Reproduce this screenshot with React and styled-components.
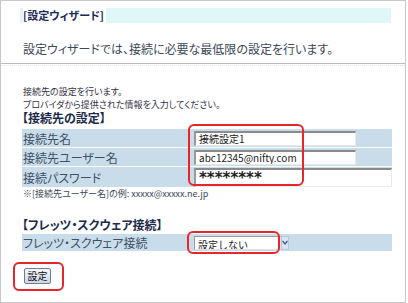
import React from 'react'
import styled, { createGlobalStyle } from 'styled-components'

const GlobalStyle = createGlobalStyle`
  html, body {
    margin: 0;
    padding: 0;
    background: #fff;
  }
  body {
    font-family: "Noto Sans CJK JP", "DejaVu Sans", sans-serif;
    font-feature-settings: "palt";
    color: #3b4a5c;
  }
`

const Frame = styled.div`
  position: relative;
  box-sizing: border-box;
  width: 406px;
  height: 303px;
  border: 1px solid #c8c8c8;
`

const TitleBar = styled.div`
  margin: 7px 14px 0 19px;
  height: 15px;
  padding-left: 3px;
  font-size: 11px;
  font-weight: bold;
  line-height: 15px;
  color: #1c2a5a;
  background-color: #dff7f9;
`

const TitleText = styled.span`
  background: #fff;
  padding-right: 2px;
`

const Lead = styled.p`
  margin: 19px 0 0 22px;
  font-size: 12px;
  line-height: 14px;
  color: #3c4858;
`

const Divider = styled.div`
  margin-top: 7px;
  border-top: 1px solid #bcbcbc;
  border-bottom: 1px dotted #e2e2e2;
  height: 1px;
`

const Body = styled.div`
  padding: 0 13px 0 21px;
`

const Intro = styled.p`
  margin: 19px 0 0 1px;
  font-size: 9px;
  line-height: 13px;
  color: #334;
`

const Heading = styled.h2`
  margin: 0;
  font-size: 12px;
  font-weight: bold;
  line-height: 14px;
  color: #1c2a4a;
  margin-top: ${p => p.$top || 0}px;
`

const Table = styled.div`
  display: flex;
  flex-direction: column;
  gap: 1px;
  width: 370px;
  margin-top: ${p => p.$top || 0}px;
`

const Row = styled.div`
  display: flex;
  align-items: center;
  height: ${p => p.$h || 18}px;
  background: #c9dcea;
`

const Label = styled.div`
  width: 170px;
  padding-left: 1px;
  font-size: 12px;
  color: #3e5068;
`

const Field = styled.input`
  box-sizing: border-box;
  width: ${p => p.$w}px;
  height: ${p => p.$h || 15}px;
  margin-left: 1px;
  padding: 0 3px;
  border-style: solid;
  border-width: 2px 1px 1px 2px;
  border-color: #8a8a8a #eaeaea #eaeaea #9a9a9a;
  background: #fff;
  font-family: ${p => (p.$mono ? '"DejaVu Sans", sans-serif' : '"Noto Sans CJK JP", "DejaVu Sans", sans-serif')};
  font-size: ${p => p.$fs || 10}px;
  font-weight: ${p => (p.$bold ? 'bold' : 'normal')};
  color: #222;
  outline: none;
`

const Note = styled.p`
  margin: 1px 0 0 1px;
  font-size: 9px;
  line-height: 12px;
  color: #3c4858;
`

const Dropdown = styled.div`
  display: flex;
  align-items: center;
  margin-left: 1px;
`

const Select = styled.select`
  appearance: none;
  box-sizing: border-box;
  width: 87px;
  height: 14px;
  padding: 0 3px;
  border-style: solid;
  border-width: 1px;
  border-color: #9a9a9a #e0e0e0 #e0e0e0 #9a9a9a;
  background: #fff;
  font-family: "Noto Sans CJK JP", "DejaVu Sans", sans-serif;
  font-size: 10px;
  color: #222;
  outline: none;
`

const Arrow = styled.span`
  display: flex;
  align-items: center;
  justify-content: center;
  width: 8px;
  height: 14px;
  background: #d9e4f2;
  border: 1px solid #b8c8dc;
  box-sizing: border-box;
`

const SubmitButton = styled.button`
  display: block;
  margin: 17px 0 0 2px;
  width: 27px;
  height: 16px;
  padding: 0;
  border: 1px solid #6c7c94;
  border-radius: 2px;
  background: linear-gradient(#f4f6fa, #cdd8e6);
  font-family: "Noto Sans CJK JP", "DejaVu Sans", sans-serif;
  font-size: 10px;
  line-height: 14px;
  color: #111;
`

const Highlight = styled.div`
  position: absolute;
  box-sizing: border-box;
  border: 2px solid #e8262a;
  border-radius: 6px;
  left: ${p => p.$x}px;
  top: ${p => p.$y}px;
  width: ${p => p.$w}px;
  height: ${p => p.$h}px;
  pointer-events: none;
`

const App = () => {
  return (
    <>
      <GlobalStyle />
      <Frame>
        <TitleBar><TitleText>[設定ウィザード]</TitleText></TitleBar>
        <Lead>設定ウィザードでは、接続に必要な最低限の設定を行います。</Lead>
        <Divider />
        <Body>
          <Intro>
            接続先の設定を行います。<br />
            プロバイダから提供された情報を入力してください。
          </Intro>
          <Heading>【接続先の設定】</Heading>
          <Table $top={4}>
            <Row>
              <Label>接続先名</Label>
              <Field $w={162} defaultValue="接続設定1" />
            </Row>
            <Row>
              <Label>接続先ユーザー名</Label>
              <Field $w={162} defaultValue="abc12345@nifty.com" />
            </Row>
            <Row $h={20}>
              <Label>接続パスワード</Label>
              <Field $w={198} $h={19} $fs={15} $bold $mono defaultValue="********" />
            </Row>
          </Table>
          <Note>※[接続先ユーザー名]の例: xxxxx@xxxxx.ne.jp</Note>
          <Heading $top={18}>【フレッツ・スクウェア接続】</Heading>
          <Table $top={2}>
            <Row $h={17}>
              <Label>フレッツ・スクウェア接続</Label>
              <Dropdown>
                <Select defaultValue="none">
                  <option value="none">設定しない</option>
                  <option value="on">設定する</option>
                </Select>
                <Arrow>
                  <svg width="6" height="5" viewBox="0 0 6 5">
                    <path d="M0.5 1 L3 4 L5.5 1" fill="none" stroke="#3a5a9a" strokeWidth="1.2" />
                  </svg>
                </Arrow>
              </Dropdown>
            </Row>
          </Table>
          <SubmitButton type="button">設定</SubmitButton>
        </Body>
        <Highlight $x={187} $y={123} $w={116} $h={62} />
        <Highlight $x={186} $y={230} $w={93} $h={23} />
        <Highlight $x={12} $y={261} $w={51} $h={29} />
      </Frame>
    </>
  )
}

export default App
